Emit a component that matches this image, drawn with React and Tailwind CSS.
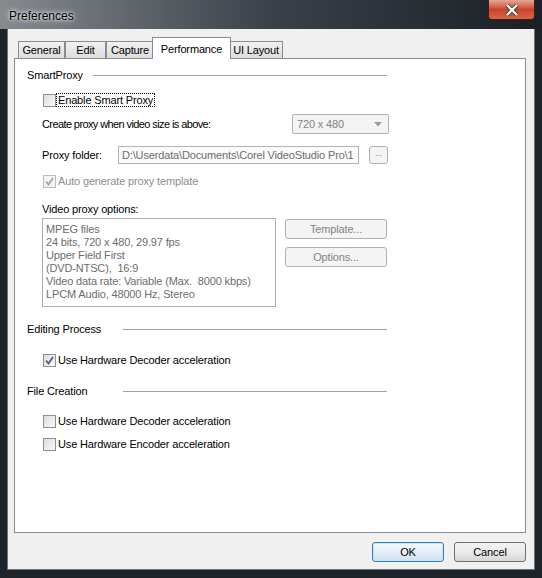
import React from "react";

const font = { fontFamily: '"Liberation Sans", Arial, sans-serif' };

const Check = ({ checked, disabled }) => (
  <span
    className={`w-[13px] h-[13px] shrink-0 border flex items-center justify-center ${
      disabled ? "border-[#bcbcbc] bg-[#f4f4f4]" : "border-[#8f8f8f] bg-gradient-to-br from-[#dcdcdc] to-[#fafafa]"
    }`}
  >
    {checked && (
      <svg width="9" height="9" viewBox="0 0 9 9">
        <path
          d="M1 4.5 L3.5 7.5 L8 1"
          fill="none"
          stroke={disabled ? "#a6a6a6" : "#4b5e94"}
          strokeWidth="1.8"
        />
      </svg>
    )}
  </span>
);

const CheckRow = ({ label, checked, disabled, focus, className = "" }) => (
  <div className={`flex items-center h-[14px] pl-[28px] ${className}`}>
    <Check checked={checked} disabled={disabled} />
    <span
      className={`px-[1px] leading-[12px] ${focus ? "border border-dotted border-black" : "border border-transparent"} ${
        disabled ? "text-[#8d8d8d]" : "text-black"
      }`}
    >
      {label}
    </span>
  </div>
);

// label column width puts the rule where the reference starts it; rule ends at x=387
const Heading = ({ label, labelW, lineW, className = "" }) => (
  <div className={`flex items-center h-[14px] pl-[12px] ${className}`}>
    <span className="shrink-0" style={{ width: labelW }}>{label}</span>
    <div className="h-px bg-[#a0a0a0]" style={{ width: lineW }} />
  </div>
);

const DisabledButton = ({ label, className = "" }) => (
  <div
    className={`h-[20px] w-[102px] rounded-[3px] border border-[#adb2b5] bg-[#f4f4f4] text-[#838383] flex items-center justify-center ${className}`}
  >
    {label}
  </div>
);

const tabs = [
  { label: "General", w: "w-[47px]" },
  { label: "Edit", w: "w-[41px]" },
  { label: "Capture", w: "w-[48px]" },
];

export default function App() {
  return (
    <div style={font} className="w-[542px] h-[578px] bg-[#1d242a] overflow-hidden text-[11px] tracking-[-0.15px] text-black">
      {/* Title bar */}
      <div className="h-[29px] flex items-start bg-gradient-to-r from-[#868b90] via-[#3a4148] to-[#1a2026]">
        <span className="mt-[7px] ml-[9px] text-[12px] tracking-normal text-black [text-shadow:0_0_6px_#ffffff,0_0_3px_#ffffff]">
          Preferences
        </span>
        <div className="ml-auto mr-[7px] w-[47px] h-[20px] rounded-b-[4px] border border-t-0 border-[#4a1a12] bg-gradient-to-b from-[#e9a694] via-[#c9432c] to-[#d6654a] flex items-center justify-center">
          <svg width="14" height="12" viewBox="0 0 14 12">
            <path d="M2 1 L12 11 M12 1 L2 11" stroke="#3a2a28" strokeWidth="4" />
            <path d="M2 1 L12 11 M12 1 L2 11" stroke="#ffffff" strokeWidth="2.4" />
          </svg>
        </div>
      </div>

      {/* Client area */}
      <div className="ml-[7px] w-[528px] h-[541px] bg-[#f0f0f0] border-l border-r border-b border-[#6e7379] flex flex-col">
        {/* Tabs */}
        <div className="mt-[8px] ml-[10px] h-[21px] flex items-end">
          {tabs.map((t) => (
            <div
              key={t.label}
              className={`${t.w} h-[17px] border border-b-0 border-[#898c95] bg-gradient-to-b from-[#f2f2f2] to-[#dcdcdc] flex items-center justify-center`}
            >
              {t.label}
            </div>
          ))}
          <div className="relative z-10 -mx-[2px] -mb-px w-[79px] h-[22px] border border-b-0 border-[#898c95] bg-white flex items-start justify-center pt-[3px]">
            Performance
          </div>
          <div className="w-[54px] h-[17px] border border-b-0 border-[#898c95] bg-gradient-to-b from-[#f2f2f2] to-[#dcdcdc] flex items-center justify-center">
            UI Layout
          </div>
        </div>

        {/* Panel */}
        <div className="ml-[6px] w-[512px] h-[475px] border border-[#898c95] bg-white flex flex-col">
          <Heading label="SmartProxy" labelW={66} lineW={294} className="mt-[9px]" />
          <CheckRow label="Enable Smart Proxy" focus className="mt-[11px]" />

          <div className="mt-[7px] h-[20px] flex items-center pl-[27px]">
            <span className="tracking-[-0.6px]">Create proxy when video size is above:</span>
            <div className="ml-auto mr-[136px] w-[97px] h-[20px] rounded-[2px] border border-[#adb2b5] bg-[#f4f4f4] flex items-center pl-[4px] pr-[6px] text-[#838383]">
              <span>720 x 480</span>
              <svg className="ml-auto" width="8" height="5" viewBox="0 0 8 5">
                <path d="M0 0 L8 0 L4 4.5 Z" fill="#9a9a9a" />
              </svg>
            </div>
          </div>

          <div className="mt-[11px] h-[20px] flex items-center pl-[27px]">
            <span className="w-[76px] shrink-0">Proxy folder:</span>
            <div className="w-[241px] h-[18px] border border-[#afb4b8] bg-[#fbfbfb] flex items-center pl-[3px] overflow-hidden whitespace-nowrap text-[#6d6d6d]">
              <span className="overflow-hidden">{"D:\\Userdata\\Documents\\Corel VideoStudio Pro\\1"}</span>
            </div>
            <div className="ml-[10px] w-[19px] h-[18px] rounded-[3px] border border-[#adb2b5] bg-[#f4f4f4] flex items-center justify-center text-[#838383] text-[9px] leading-none pb-[3px]">
              ...
            </div>
          </div>

          <CheckRow label="Auto generate proxy template" checked disabled className="mt-[9px]" />

          <div className="mt-[14px] h-[14px] flex items-center pl-[27px]">Video proxy options:</div>

          <div className="mt-[2px] flex pl-[27px]">
            <div className="w-[234px] h-[89px] border border-[#abadb3] pt-[4px] pl-[3px] leading-[13px] text-[#6d6d6d] whitespace-nowrap">
              <div>MPEG files</div>
              <div>24 bits, 720 x 480, 29.97 fps</div>
              <div>Upper Field First</div>
              <div>(DVD-NTSC),&nbsp; 16:9</div>
              <div>Video data rate: Variable (Max.&nbsp; 8000 kbps)</div>
              <div>LPCM Audio, 48000 Hz, Stereo</div>
            </div>
            <div className="ml-[9px] mt-px flex flex-col gap-[8px]">
              <DisabledButton label="Template..." />
              <DisabledButton label="Options..." />
            </div>
          </div>

          <Heading label="Editing Process" labelW={96} lineW={264} className="mt-[15px]" />
          <CheckRow label="Use Hardware Decoder acceleration" checked className="mt-[17px]" />

          <Heading label="File Creation" labelW={96} lineW={264} className="mt-[17px]" />
          <CheckRow label="Use Hardware Decoder acceleration" className="mt-[16px]" />
          <CheckRow label="Use Hardware Encoder acceleration" className="mt-[9px]" />
        </div>

        {/* Dialog buttons */}
        <div className="mt-[9px] flex justify-end pr-[8px] gap-[10px]">
          <div className="w-[72px] h-[20px] rounded-[3px] border border-[#3c7fb1] bg-gradient-to-b from-[#f4f9fd] via-[#e3eef8] to-[#cfe1f0] shadow-[inset_0_0_0_1px_#bde4f8] flex items-center justify-center">
            OK
          </div>
          <div className="w-[72px] h-[20px] rounded-[3px] border border-[#707070] bg-gradient-to-b from-[#f2f2f2] via-[#ebebeb] to-[#d6d6d6] flex items-center justify-center">
            Cancel
          </div>
        </div>
      </div>
    </div>
  );
}
